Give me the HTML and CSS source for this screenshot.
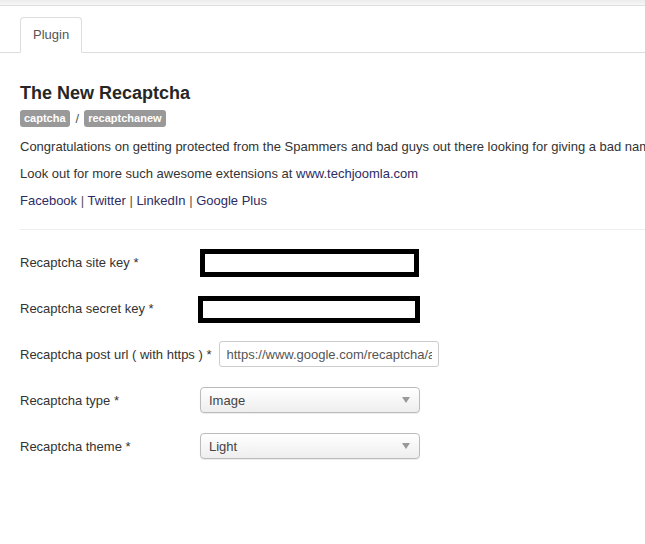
FILE: index.html
```html
<!DOCTYPE html>
<html lang="en">
<head>
    <meta charset="UTF-8">
    <title>Plugin - The New Recaptcha</title>
    <link rel="stylesheet" href="styles.css">
</head>
<body>
    <div class="topbar"></div>

    <!-- Tabs -->
    <ul class="tabs">
        <li class="tab active">Plugin</li>
    </ul>

    <div class="content">
        <h2 class="title">The New Recaptcha</h2>
        <div class="tags">
            <span class="badge">captcha</span>
            <span class="sep">/</span>
            <span class="badge">recaptchanew</span>
        </div>
        <p>Congratulations on getting protected from the Spammers and bad guys out there looking for giving a bad name to your site.</p>
        <p>Look out for more such awesome extensions at <a href="#">www.techjoomla.com</a></p>
        <p class="social">
            <a href="#">Facebook</a> | <a href="#">Twitter</a> | <a href="#">LinkedIn</a> | <a href="#">Google Plus</a>
        </p>
        <hr>

        <!-- Plugin params -->
        <div class="field">
            <label>Recaptcha site key *</label>
            <div class="redact"></div>
        </div>
        <div class="field">
            <label>Recaptcha secret key *</label>
            <div class="redact redact-wide"></div>
        </div>
        <div class="field">
            <label>Recaptcha post url ( with https ) *</label>
            <input class="input" type="text" value="https://www.google.com/recaptcha/api/siteverify" readonly>
        </div>
        <div class="field">
            <label>Recaptcha type *</label>
            <div class="select">
                <span>Image</span>
                <svg width="8" height="6" viewBox="0 0 8 6"><path d="M0 0h8L4 6z" fill="#999"/></svg>
            </div>
        </div>
        <div class="field">
            <label>Recaptcha theme *</label>
            <div class="select">
                <span>Light</span>
                <svg width="8" height="6" viewBox="0 0 8 6"><path d="M0 0h8L4 6z" fill="#999"/></svg>
            </div>
        </div>
    </div>
</body>
</html>
```

FILE: styles.css
```css
body {
    margin: 0;
    font-family: "Liberation Sans", Arial, sans-serif;
    font-size: 13px;
    color: #333;
    background: #fff;
    overflow: hidden;
}
.topbar {
    height: 5px;
    background: linear-gradient(#ececec, #f7f7f7);
    border-bottom: 1px solid #e0e0e0;
}
.tabs {
    list-style: none;
    margin: 11px 0 0 0;
    padding: 0 0 0 20px;
    border-bottom: 1px solid #ddd;
    display: flex;
}
.tab {
    height: 34px;
    line-height: 34px;
    padding: 0 12px;
    margin-bottom: -1px;
    color: #555;
    border: 1px solid #ddd;
    border-bottom-color: #fff;
    border-radius: 4px 4px 0 0;
    background: #fff;
}
.content {
    padding-left: 20px;
}
.title {
    margin: 30px 0 0 0;
    font-size: 18px;
    line-height: 20px;
    font-weight: bold;
    color: #262626;
}
.tags {
    margin-top: 7px;
    height: 17px;
    display: flex;
    align-items: center;
}
.badge {
    display: inline-block;
    height: 17px;
    line-height: 17px;
    padding: 0 4px;
    background: #999;
    color: #fff;
    font-size: 11px;
    font-weight: bold;
    border-radius: 3px;
}
.sep {
    margin: 0 5px 0 6px;
    color: #555;
}
p {
    margin: 0 0 9px 0;
    line-height: 18px;
    white-space: nowrap;
    overflow: hidden;
}
.tags + p {
    margin-top: 11px;
}
a {
    color: #2d2b63;
    text-decoration: none;
}
.social {
    color: #555;
}
hr {
    margin: 19px 0 18px 0;
    border: 0;
    border-top: 1px solid #eee;
}
.field {
    display: flex;
    align-items: center;
    height: 28px;
    margin-bottom: 18px;
}
.field label {
    flex-shrink: 0;
    min-width: 180px;
    padding-right: 8px;
    box-sizing: border-box;
}
.redact {
    width: 219px;
    height: 28px;
    margin-top: 1px;
    box-sizing: border-box;
    border: 5px solid #000;
}
.redact-wide {
    width: 222px;
    height: 27px;
    margin-left: -2px;
    margin-top: 3px;
}
.input {
    width: 220px;
    height: 26px;
    box-sizing: border-box;
    padding: 0 6px;
    border: 1px solid #ccc;
    border-radius: 3px;
    font-family: inherit;
    font-size: 13px;
    color: #555;
}
.select {
    width: 220px;
    height: 26px;
    box-sizing: border-box;
    display: flex;
    align-items: center;
    justify-content: space-between;
    padding: 0 9px 0 8px;
    border: 1px solid #bbb;
    border-radius: 4px;
    background: linear-gradient(#fff, #eee);
    box-shadow: 0 1px 1px rgba(0, 0, 0, 0.08);
    color: #444;
}
```
